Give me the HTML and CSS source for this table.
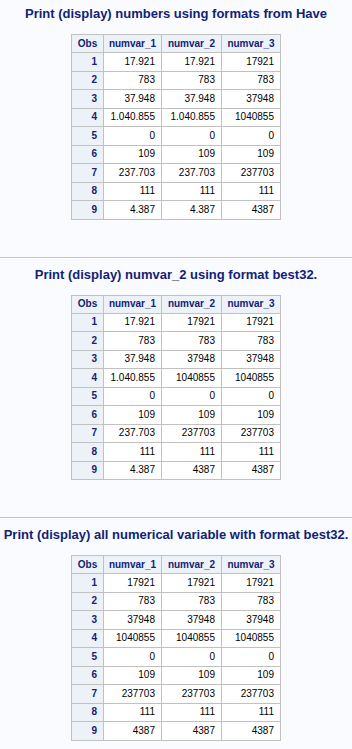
FILE: index.html
```html
<!DOCTYPE html>
<html>
<head>
<meta charset="utf-8">
<link rel="stylesheet" href="styles.css">
</head>
<body>
<section class="section first">
  <h1 class="title">Print (display) numbers using formats from Have</h1>
  <table class="tbl">
    <colgroup><col class="c-obs"><col class="c-1"><col class="c-2"><col class="c-3"></colgroup>
    <thead><tr><th>Obs</th><th>numvar_1</th><th>numvar_2</th><th>numvar_3</th></tr></thead>
    <tbody>
      <tr><th>1</th><td>17.921</td><td>17.921</td><td>17921</td></tr>
      <tr><th>2</th><td>783</td><td>783</td><td>783</td></tr>
      <tr><th>3</th><td>37.948</td><td>37.948</td><td>37948</td></tr>
      <tr><th>4</th><td>1.040.855</td><td>1.040.855</td><td>1040855</td></tr>
      <tr><th>5</th><td>0</td><td>0</td><td>0</td></tr>
      <tr><th>6</th><td>109</td><td>109</td><td>109</td></tr>
      <tr><th>7</th><td>237.703</td><td>237.703</td><td>237703</td></tr>
      <tr><th>8</th><td>111</td><td>111</td><td>111</td></tr>
      <tr><th>9</th><td>4.387</td><td>4.387</td><td>4387</td></tr>
    </tbody>
  </table>
</section>
<hr class="sep">
<section class="section">
  <h1 class="title">Print (display) numvar_2 using format best32.</h1>
  <table class="tbl">
    <colgroup><col class="c-obs"><col class="c-1"><col class="c-2"><col class="c-3"></colgroup>
    <thead><tr><th>Obs</th><th>numvar_1</th><th>numvar_2</th><th>numvar_3</th></tr></thead>
    <tbody>
      <tr><th>1</th><td>17.921</td><td>17921</td><td>17921</td></tr>
      <tr><th>2</th><td>783</td><td>783</td><td>783</td></tr>
      <tr><th>3</th><td>37.948</td><td>37948</td><td>37948</td></tr>
      <tr><th>4</th><td>1.040.855</td><td>1040855</td><td>1040855</td></tr>
      <tr><th>5</th><td>0</td><td>0</td><td>0</td></tr>
      <tr><th>6</th><td>109</td><td>109</td><td>109</td></tr>
      <tr><th>7</th><td>237.703</td><td>237703</td><td>237703</td></tr>
      <tr><th>8</th><td>111</td><td>111</td><td>111</td></tr>
      <tr><th>9</th><td>4.387</td><td>4387</td><td>4387</td></tr>
    </tbody>
  </table>
</section>
<hr class="sep">
<section class="section">
  <h1 class="title">Print (display) all numerical variable with format best32.</h1>
  <table class="tbl">
    <colgroup><col class="c-obs"><col class="c-1"><col class="c-2"><col class="c-3"></colgroup>
    <thead><tr><th>Obs</th><th>numvar_1</th><th>numvar_2</th><th>numvar_3</th></tr></thead>
    <tbody>
      <tr><th>1</th><td>17921</td><td>17921</td><td>17921</td></tr>
      <tr><th>2</th><td>783</td><td>783</td><td>783</td></tr>
      <tr><th>3</th><td>37948</td><td>37948</td><td>37948</td></tr>
      <tr><th>4</th><td>1040855</td><td>1040855</td><td>1040855</td></tr>
      <tr><th>5</th><td>0</td><td>0</td><td>0</td></tr>
      <tr><th>6</th><td>109</td><td>109</td><td>109</td></tr>
      <tr><th>7</th><td>237703</td><td>237703</td><td>237703</td></tr>
      <tr><th>8</th><td>111</td><td>111</td><td>111</td></tr>
      <tr><th>9</th><td>4387</td><td>4387</td><td>4387</td></tr>
    </tbody>
  </table>
</section>
</body>
</html>
```
FILE: styles.css
```css
html, body {
  margin: 0;
  padding: 0;
  background: #fafbfe;
}
body {
  font-family: "Liberation Sans", Arial, sans-serif;
  color: #000;
}
.section {
  display: flex;
  flex-direction: column;
  align-items: center;
  padding-top: 8px;
}
.section.first {
  padding-top: 6px;
}
.title {
  margin: 0;
  font-size: 13px;
  line-height: 16px;
  font-weight: bold;
  color: #112277;
  text-align: center;
  white-space: nowrap;
}
.tbl {
  margin-top: 12px;
  border-collapse: collapse;
  table-layout: fixed;
  width: 209px;
  background: #fff;
  border: 1px solid #c1c1c1;
  font-size: 10px;
}
.c-obs { width: 32px; }
.c-1 { width: 58px; }
.c-2 { width: 60px; }
.c-3 { width: 59px; }
.tbl th, .tbl td {
  border: 1px solid #c1c1c1;
  padding: 0 6px 0 2px;
  height: 17.5px;
  line-height: 12px;
  white-space: nowrap;
  text-align: right;
}
.tbl thead th {
  height: 17px;
  text-align: center;
  padding: 0 2px;
}
.tbl th {
  background: #edf2f9;
  color: #112277;
  font-weight: bold;
}
.tbl td {
  color: #000;
}
.sep {
  width: 100%;
  margin: 37px 0 0;
  border: 0;
  border-top: 1px solid #c4c4c4;
  border-bottom: 1px solid #ffffff;
  height: 0;
}
```
